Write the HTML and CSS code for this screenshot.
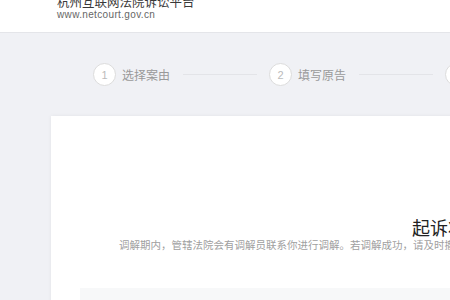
FILE: index.html
```html
<!DOCTYPE html>
<html lang="zh-CN">
<head>
  <meta charset="UTF-8">
  <title>杭州互联网法院诉讼平台</title>
  <link rel="stylesheet" href="styles.css">
</head>
<body>
  <div class="header">
    <div class="brand">
      <div class="brand-title">杭州互联网法院诉讼平台</div>
      <div class="brand-url">www.netcourt.gov.cn</div>
    </div>
  </div>

  <div class="steps">
    <div class="step">
      <span class="step-num">1</span>
      <span class="step-label">选择案由</span>
    </div>
    <div class="step-line"></div>
    <div class="step">
      <span class="step-num">2</span>
      <span class="step-label">填写原告</span>
    </div>
    <div class="step-line"></div>
    <div class="step">
      <span class="step-num">3</span>
      <span class="step-label">填写被告</span>
    </div>
  </div>

  <div class="card">
    <h2 class="result-title">起诉状已提交</h2>
    <p class="result-desc">调解期内，管辖法院会有调解员联系你进行调解。若调解成功，请及时撤回起诉。</p>
    <div class="info-box"></div>
  </div>
</body>
</html>
```

FILE: styles.css
```css
* {
  margin: 0;
  padding: 0;
  box-sizing: border-box;
  font-family: "Noto Sans CJK SC", "Liberation Sans", sans-serif;
}
body {
  width: 450px;
  height: 300px;
  overflow: hidden;
  background: #f0f1f5;
}
.header {
  height: 33px;
  background: #fff;
  border-bottom: 1px solid #e4e5e9;
  overflow: hidden;
}
.brand {
  padding-left: 57px;
}
.brand-title {
  margin-top: -4px;
  font-size: 12.5px;
  line-height: 12.5px;
  color: #3a3a3a;
  white-space: nowrap;
}
.brand-url {
  margin-top: 0.5px;
  font-family: "Liberation Sans", sans-serif;
  font-size: 10px;
  line-height: 12px;
  letter-spacing: 0.35px;
  color: #666;
}
.steps {
  display: flex;
  align-items: center;
  padding: 30px 0 0 93px;
  white-space: nowrap;
  overflow: hidden;
}
.step {
  display: flex;
  align-items: center;
  gap: 6px;
  flex-shrink: 0;
}
.step-num {
  width: 23px;
  height: 23px;
  border: 1px solid #dcdcdc;
  border-radius: 50%;
  background: #fff;
  display: flex;
  align-items: center;
  justify-content: center;
  font-family: "Liberation Sans", sans-serif;
  font-size: 11px;
  color: #bbb;
}
.step-label {
  font-size: 12px;
  line-height: 16px;
  color: #999;
}
.step-line {
  width: 74px;
  height: 1px;
  margin: 0 12px 0 13px;
  background: #e3e4e8;
  flex-shrink: 0;
}
.card {
  margin: 30px 0 0 51px;
  width: 900px;
  height: 400px;
  padding: 100.5px 29px 0;
  background: #fff;
  box-shadow: 0 0 4px rgba(0, 0, 0, 0.06);
}
.result-title {
  margin-left: 332px;
  font-size: 18px;
  line-height: 20px;
  font-weight: normal;
  color: #222;
  white-space: nowrap;
}
.result-desc {
  margin-left: 39px;
  font-size: 10.5px;
  line-height: 15px;
  color: #a0a0a0;
  white-space: nowrap;
}
.info-box {
  margin-top: 36.5px;
  height: 120px;
  background: #f7f8f9;
}
```
